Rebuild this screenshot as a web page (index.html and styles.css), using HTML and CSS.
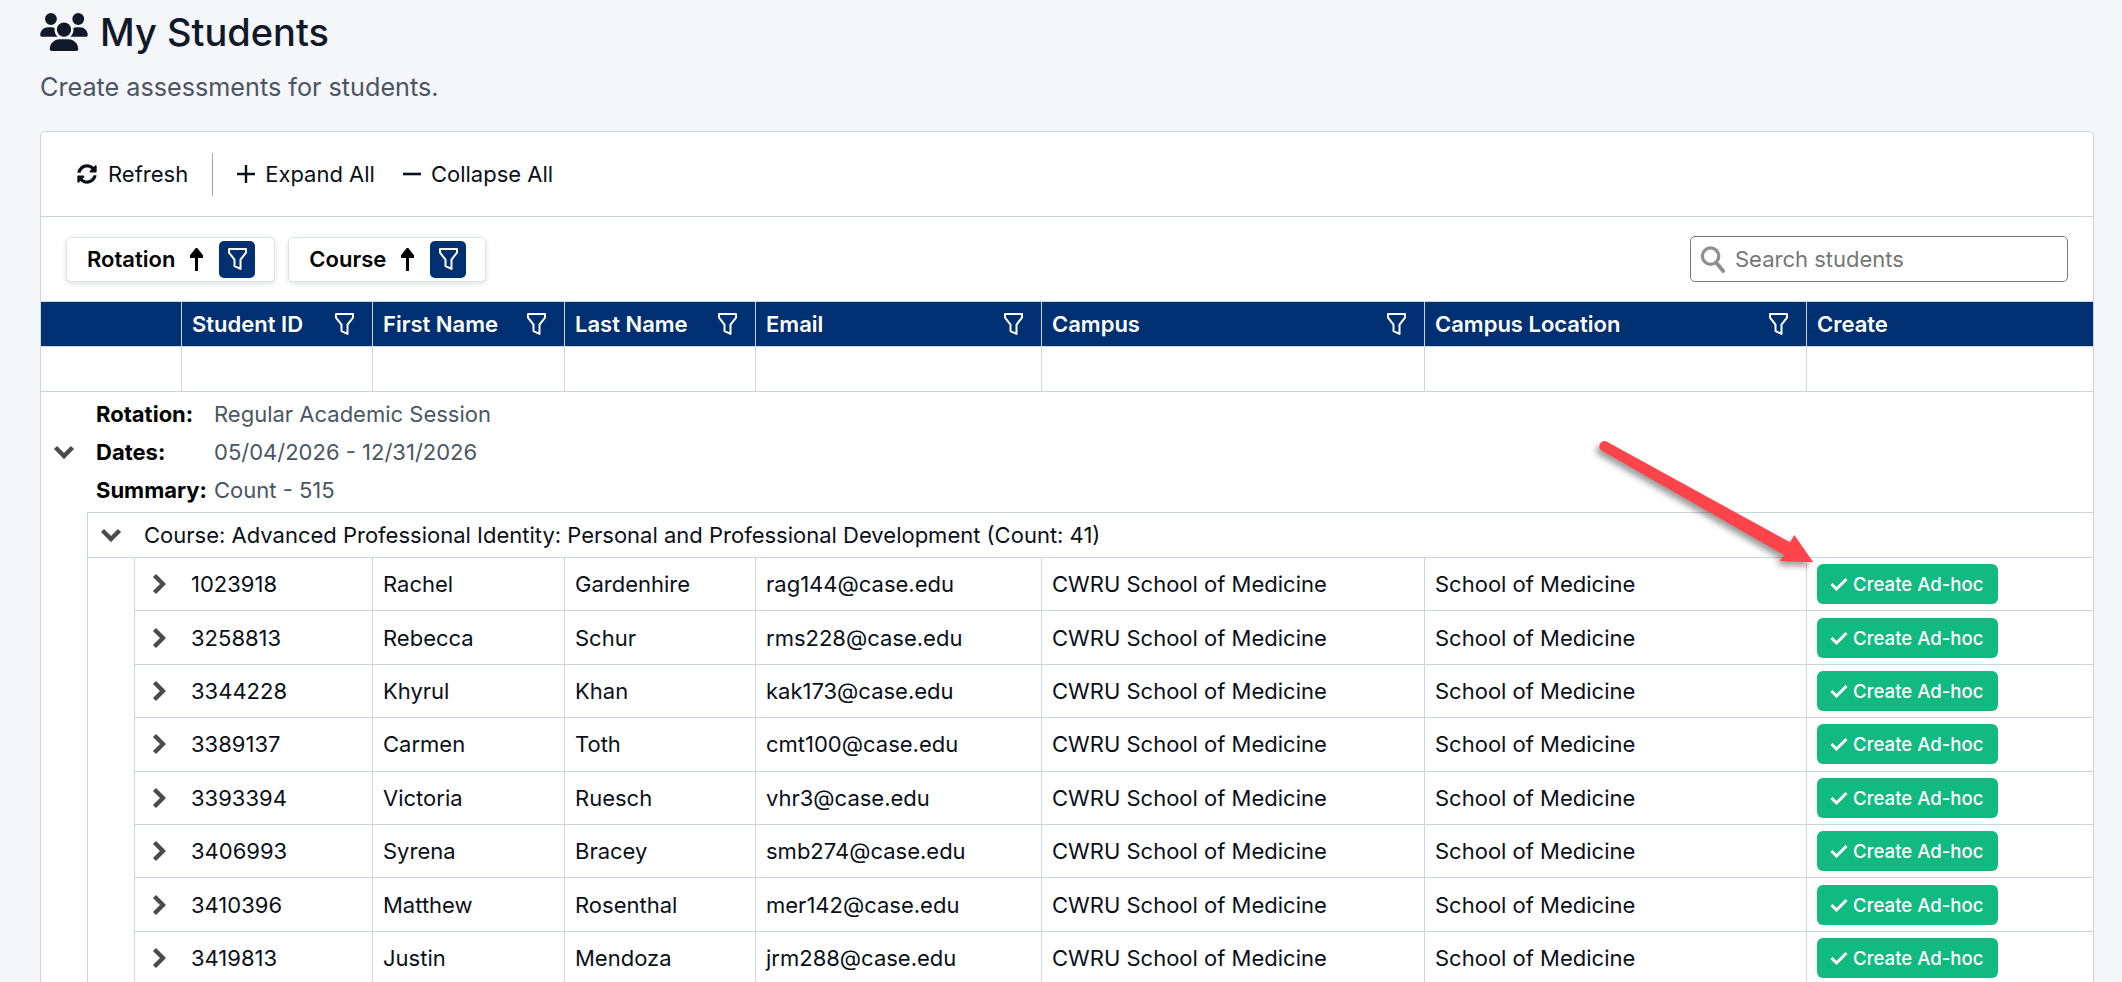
FILE: index.html
```html
<!DOCTYPE html>
<html lang="en">
<head>
    <meta charset="UTF-8">
    <meta name="viewport" content="width=device-width, initial-scale=1.0">
    <title>My Students</title>
    <link rel="stylesheet" href="styles.css">
</head>
<body>
    <svg width="0" height="0" class="defs">
        <symbol id="funnel" viewBox="0 0 19 22">
            <path d="M1 1h17v3.6l-5.5 7v9.3l-6-2.8v-6.5L1 4.6z" fill="none" stroke="currentColor" stroke-width="2" stroke-linejoin="round"/>
        </symbol>
        <symbol id="chev-down" viewBox="0 0 22 14">
            <path d="M2.5 2.5 11 11l8.5-8.5" fill="none" stroke="currentColor" stroke-width="4.4"/>
        </symbol>
        <symbol id="chev-right" viewBox="0 0 14 22">
            <path d="M2.5 2.5 11 11l-8.5 8.5" fill="none" stroke="currentColor" stroke-width="4.4"/>
        </symbol>
        <symbol id="up" viewBox="0 0 13 23">
            <path d="M6.5 23V4M1 8.5 6.5 1.5 12 8.5z" fill="currentColor" stroke="currentColor" stroke-width="3"/>
        </symbol>
        <symbol id="check" viewBox="0 0 18 14">
            <path d="M1.5 7 6.5 12 16.5 2" fill="none" stroke="currentColor" stroke-width="3"/>
        </symbol>
    </svg>

    <header class="page-head">
        <h1>
            <svg class="users-icon" viewBox="0 0 640 512"><path fill="currentColor" d="M144 0a80 80 0 1 1 0 160A80 80 0 1 1 144 0zM512 0a80 80 0 1 1 0 160A80 80 0 1 1 512 0zM0 298.7C0 239.8 47.8 192 106.7 192h42.7c15.9 0 31 3.5 44.6 9.7c-1.3 7.2-1.9 14.7-1.9 22.3c0 38.2 16.8 72.5 43.3 96c-.2 0-.4 0-.7 0H21.3C9.6 320 0 310.4 0 298.7zM405.3 320c-.2 0-.4 0-.7 0c26.6-23.5 43.3-57.8 43.3-96c0-7.6-.7-15-1.9-22.3c13.6-6.3 28.7-9.7 44.6-9.7h42.7C592.2 192 640 239.8 640 298.7c0 11.8-9.6 21.3-21.3 21.3H405.3zM224 224a96 96 0 1 1 192 0 96 96 0 1 1 -192 0zM128 485.3C128 411.7 187.7 352 261.3 352H378.7C452.3 352 512 411.7 512 485.3c0 14.7-11.9 26.7-26.7 26.7H154.7c-14.7 0-26.7-11.9-26.7-26.7z"/></svg>
            My Students
        </h1>
        <p class="subtitle">Create assessments for students.</p>
    </header>

    <section class="panel">
        <div class="toolbar">
            <button class="tool">
                <svg class="tool-icon" viewBox="0 0 512 512"><path fill="currentColor" d="M370.72 133.28C339.458 104.008 298.888 87.962 255.848 88c-77.458.068-144.328 53.178-162.791 126.85-1.344 5.363-6.122 9.15-11.651 9.15H24.103c-7.498 0-13.194-6.807-11.807-14.176C33.933 94.924 134.813 8 256 8c66.448 0 126.791 26.136 171.315 68.685L463.03 40.97C478.149 25.851 504 36.559 504 57.941V192c0 13.255-10.745 24-24 24H345.941c-21.382 0-32.09-25.851-16.971-40.971l41.75-41.749zM32 296h134.059c21.382 0 32.09 25.851 16.971 40.971l-41.75 41.75c31.262 29.273 71.835 45.319 114.876 45.28 77.418-.07 144.315-53.144 162.787-126.849 1.344-5.363 6.122-9.15 11.651-9.15h57.304c7.498 0 13.194 6.807 11.807 14.176C478.067 417.076 377.187 504 256 504c-66.448 0-126.791-26.136-171.315-68.685L48.97 471.03C33.851 486.149 8 475.441 8 454.059V320c0-13.255 10.745-24 24-24z"/></svg>
                Refresh
            </button>
            <span class="tool-sep"></span>
            <button class="tool tool-plain">
                <svg class="tool-icon" viewBox="0 0 20 20"><path d="M10 1v18M1 10h18" stroke="currentColor" stroke-width="2.4"/></svg>
                Expand All
            </button>
            <button class="tool tool-plain tool-collapse">
                <svg class="tool-icon" viewBox="0 0 20 20"><path d="M1 10h18" stroke="currentColor" stroke-width="2.6"/></svg>
                Collapse All
            </button>
        </div>

        <div class="groupbar">
            <div class="chips">
                <div class="chip">
                    <span>Rotation</span>
                    <svg class="chip-arrow"><use href="#up"/></svg>
                    <span class="chip-filter"><svg class="funnel"><use href="#funnel"/></svg></span>
                </div>
                <div class="chip">
                    <span>Course</span>
                    <svg class="chip-arrow"><use href="#up"/></svg>
                    <span class="chip-filter"><svg class="funnel"><use href="#funnel"/></svg></span>
                </div>
            </div>
            <label class="search">
                <svg class="search-icon" viewBox="0 0 26 28"><circle cx="11" cy="11" r="8.5" fill="none" stroke="currentColor" stroke-width="3.4"/><path d="M17 18l7 8.5" stroke="currentColor" stroke-width="4" stroke-linecap="round"/></svg>
                <input type="text" placeholder="Search students">
            </label>
        </div>

        <div class="head-row cols">
            <div class="hcell"></div>
            <div class="hcell">Student ID<svg class="funnel"><use href="#funnel"/></svg></div>
            <div class="hcell">First Name<svg class="funnel"><use href="#funnel"/></svg></div>
            <div class="hcell">Last Name<svg class="funnel"><use href="#funnel"/></svg></div>
            <div class="hcell">Email<svg class="funnel"><use href="#funnel"/></svg></div>
            <div class="hcell">Campus<svg class="funnel"><use href="#funnel"/></svg></div>
            <div class="hcell">Campus Location<svg class="funnel"><use href="#funnel"/></svg></div>
            <div class="hcell">Create</div>
        </div>
        <div class="filter-row cols">
            <div></div><div></div><div></div><div></div><div></div><div></div><div></div><div></div>
        </div>

        <div class="rotation">
            <svg class="chev-down"><use href="#chev-down"/></svg>
            <dl class="rotation-info">
                <dt>Rotation:</dt><dd>Regular Academic Session</dd>
                <dt>Dates:</dt><dd>05/04/2026 - 12/31/2026</dd>
                <dt>Summary:</dt><dd>Count - 515</dd>
            </dl>
        </div>

        <div class="course">
            <div class="course-title">
                <svg class="chev-down"><use href="#chev-down"/></svg>
                Course: Advanced Professional Identity: Personal and Professional Development (Count: 41)
            </div>
            <div class="students" id="students"></div>
        </div>
    </section>

    <svg class="callout" width="240" height="150" viewBox="1590 430 240 150">
        <path d="M1606.5 441.5 1790 542.3 1794.3 535 1813.3 562.3 1780 561 1784 555 1601.5 450.5A5.2 5.2 0 0 1 1606.5 441.5z" fill="#fd444a"/>
    </svg>

    <script>
        const students = [
            ['1023918', 'Rachel', 'Gardenhire', 'rag144@case.edu'],
            ['3258813', 'Rebecca', 'Schur', 'rms228@case.edu'],
            ['3344228', 'Khyrul', 'Khan', 'kak173@case.edu'],
            ['3389137', 'Carmen', 'Toth', 'cmt100@case.edu'],
            ['3393394', 'Victoria', 'Ruesch', 'vhr3@case.edu'],
            ['3406993', 'Syrena', 'Bracey', 'smb274@case.edu'],
            ['3410396', 'Matthew', 'Rosenthal', 'mer142@case.edu'],
            ['3419813', 'Justin', 'Mendoza', 'jrm288@case.edu']
        ];

        document.getElementById('students').innerHTML = students.map(s => `
            <div class="student-row">
                <div class="cell cell-id"><svg class="chev-right"><use href="#chev-right"/></svg>${s[0]}</div>
                <div class="cell">${s[1]}</div>
                <div class="cell">${s[2]}</div>
                <div class="cell">${s[3]}</div>
                <div class="cell">CWRU School of Medicine</div>
                <div class="cell">School of Medicine</div>
                <div class="cell"><button class="adhoc"><svg class="check"><use href="#check"/></svg>Create Ad-hoc</button></div>
            </div>
        `).join('');
    </script>
</body>
</html>
```

FILE: styles.css
```css
html, body {
    height: 982px;
    overflow: hidden;
}
body {
    margin: 0;
    padding: 0 28px 0 40px;
    background-color: #f4f6fa;
    font-family: Inter, "Liberation Sans", sans-serif;
    font-size: 22px;
    color: #0b0f19;
    position: relative;
}
.defs {
    position: absolute;
}
.page-head {
    height: 131px;
    padding-top: 10px;
    box-sizing: border-box;
}
h1 {
    display: flex;
    align-items: center;
    gap: 12px;
    margin: 0;
    height: 44px;
    font-size: 38px;
    font-weight: 500;
    color: #111827;
}
.users-icon {
    width: 48px;
    height: 38px;
}
.subtitle {
    margin: 18px 0 0;
    font-size: 25.2px;
    line-height: 30px;
    color: #4b5563;
}
.panel {
    background-color: white;
    border: 1px solid #cbd5e1;
    border-radius: 5px 5px 0 0;
    border-bottom: none;
    height: 900px;
}
.toolbar {
    display: flex;
    align-items: center;
    height: 84px;
    padding-left: 36px;
    border-bottom: 1px solid #cbd5e1;
}
.tool {
    display: flex;
    align-items: center;
    gap: 11px;
    padding: 0;
    border: none;
    background: none;
    font: inherit;
    color: inherit;
}
.tool-plain {
    gap: 9px;
}
.tool-icon {
    width: 20px;
    height: 20px;
}
.tool-sep {
    width: 1px;
    height: 43px;
    margin: 0 23px 0 24px;
    background-color: #9ca3af;
}
.tool-collapse {
    margin-left: 27px;
}
.groupbar {
    display: flex;
    justify-content: space-between;
    align-items: center;
    height: 84px;
    padding: 0 25px 0 25px;
}
.chips {
    display: flex;
    gap: 13px;
}
.chip {
    display: flex;
    align-items: center;
    height: 45px;
    box-sizing: border-box;
    padding: 0 19px 0 20px;
    background-color: white;
    border: 1px solid #dbe3ef;
    border-radius: 5px;
    box-shadow: 0 2px 5px rgba(0, 0, 0, 0.12);
    font-weight: 600;
    font-size: 22px;
    color: black;
}
.chip-arrow {
    width: 13px;
    height: 23px;
    margin: 0 16px 0 15px;
}
.chip-filter {
    display: flex;
    align-items: center;
    justify-content: center;
    width: 36px;
    height: 37px;
    border-radius: 5px;
    background-color: #003072;
    color: white;
}
.funnel {
    width: 19px;
    height: 22px;
    flex: none;
}
.search {
    display: flex;
    align-items: center;
    gap: 10px;
    width: 378px;
    height: 46px;
    box-sizing: border-box;
    padding-left: 9px;
    border: 1px solid #767a80;
    border-radius: 5px;
    color: #8f8f8f;
}
.search-icon {
    width: 25px;
    height: 28px;
}
.search input {
    border: none;
    outline: none;
    padding: 0;
    width: 300px;
    font: inherit;
    font-size: 22px;
}
.search input::placeholder {
    color: #767676;
}
.cols {
    display: grid;
    grid-template-columns: 141px 191px 192px 191px 286px 383px 382px 1fr;
}
.head-row {
    height: 44px;
    background-color: #003072;
    color: white;
    font-weight: 600;
    font-size: 22px;
    border-top: 1px solid #cbd5e1;
    border-bottom: 1px solid #cbd5e1;
}
.hcell {
    display: flex;
    align-items: center;
    justify-content: space-between;
    padding: 0 18px 0 10px;
    border-right: 1px solid #cbd5e1;
}
.hcell:last-child {
    border-right: none;
}
.filter-row {
    height: 44px;
    border-bottom: 1px solid #cbd5e1;
}
.filter-row div {
    border-right: 1px solid #cbd5e1;
}
.filter-row div:last-child {
    border-right: none;
}
.rotation {
    display: flex;
    align-items: center;
    height: 120px;
    padding-left: 12px;
}
.chev-down {
    width: 22px;
    height: 14px;
    color: #4b4b4b;
    flex: none;
}
.rotation-info {
    display: grid;
    grid-template-columns: 118px auto;
    grid-auto-rows: 38px;
    align-items: center;
    margin: 0 0 0 21px;
}
.rotation-info dt {
    font-weight: 700;
    color: black;
}
.rotation-info dd {
    margin: 0;
    color: #4b5563;
}
.course {
    margin-left: 46px;
    border-left: 1px solid #cbd5e1;
    border-top: 1px solid #cbd5e1;
}
.course-title {
    display: flex;
    align-items: center;
    gap: 22px;
    height: 44px;
    padding-left: 12px;
    border-bottom: 1px solid #cbd5e1;
}
.students {
    margin-left: 46px;
    border-left: 1px solid #cbd5e1;
}
.student-row {
    display: grid;
    grid-template-columns: 238px 192px 191px 286px 383px 382px 1fr;
    height: 53.4px;
    box-sizing: border-box;
    border-bottom: 1px solid #cbd5e1;
}
.cell {
    display: flex;
    align-items: center;
    padding-left: 10px;
    border-right: 1px solid #cbd5e1;
}
.cell:last-child {
    border-right: none;
}
.cell-id {
    padding-left: 17px;
}
.chev-right {
    width: 14px;
    height: 22px;
    margin-right: 25px;
    color: #4b4b4b;
}
.adhoc {
    display: flex;
    align-items: center;
    gap: 5px;
    width: 181px;
    height: 40px;
    padding: 0 0 0 13px;
    border: none;
    border-radius: 6px;
    background-color: #12b981;
    color: white;
    font: inherit;
    font-size: 18.6px;
    font-weight: 500;
}
.check {
    width: 18px;
    height: 14px;
}
.callout {
    position: absolute;
    left: 1590px;
    top: 430px;
    filter: drop-shadow(-3px 4px 3px rgba(0, 0, 0, 0.4));
}
```
